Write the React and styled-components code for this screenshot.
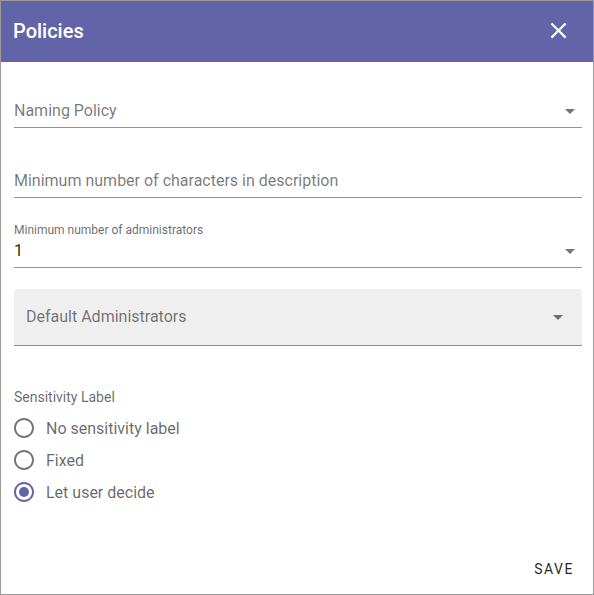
import React from "react";
import styled, { createGlobalStyle } from "styled-components";

const GlobalStyle = createGlobalStyle`
  html, body { margin: 0; padding: 0; background: #fff; }
  body { font-family: Roboto, "Noto Sans", Arial, sans-serif; }
  * { box-sizing: border-box; }
`;

const Dialog = styled.div`
  width: 594px;
  height: 595px;
  border: 1px solid #9a9a9a;
  display: flex;
  flex-direction: column;
  background: #fff;
`;

const Header = styled.header`
  height: 61px;
  background: #6264a7;
  display: flex;
  align-items: center;
  justify-content: space-between;
  padding: 0 11px 2px 12px;
`;

const Title = styled.h2`
  margin: 0;
  color: #fff;
  font-size: 20px;
  font-weight: 500;
  line-height: 24px;
`;

const CloseButton = styled.button`
  width: 48px;
  height: 48px;
  border: 0;
  background: transparent;
  padding: 0;
  display: flex;
  align-items: center;
  justify-content: center;
  color: #fff;
  cursor: pointer;
`;

const Body = styled.div`
  display: flex;
  flex-direction: column;
  gap: 21px;
  padding: 17px 11px 0 13px;
`;

const Field = styled.div`
  display: flex;
  flex-direction: column;
  height: 49px;
`;

const LabelArea = styled.div`
  height: 16px;
  display: flex;
  align-items: flex-end;
  font-size: 12px;
  line-height: 12px;
  color: rgba(0, 0, 0, 0.6);
  position: relative;
  top: 1px;
`;

const InputRoot = styled.div`
  height: 33px;
  display: flex;
  align-items: center;
  justify-content: space-between;
  padding: 6px 0 7px;
  border-bottom: 1px solid rgba(0, 0, 0, 0.42);
  font-size: 16px;
  line-height: 19px;
  color: ${(p) => (p.$value ? "rgba(0,0,0,0.87)" : "rgba(0,0,0,0.54)")};
`;

const ArrowBox = styled.span`
  width: 24px;
  height: 24px;
  margin-right: ${(p) => (p.$filled ? "12px" : "0")};
  display: flex;
  color: rgba(0, 0, 0, 0.54);
  flex-shrink: 0;
`;

const FilledRoot = styled.div`
  height: 57px;
  background: #efefef;
  border-radius: 4px 4px 0 0;
  border-bottom: 1px solid rgba(0, 0, 0, 0.42);
  display: flex;
  align-items: center;
  justify-content: space-between;
  padding: 0 0 1px 12px;
  font-size: 16px;
  line-height: 19px;
  color: rgba(0, 0, 0, 0.54);
`;

const Section = styled.div`
  display: flex;
  flex-direction: column;
  padding-top: 22px;
`;

const SectionLabel = styled.div`
  font-size: 14px;
  line-height: 16px;
  color: rgba(0, 0, 0, 0.6);
  margin-bottom: 7px;
`;

const RadioRow = styled.label`
  height: 32px;
  display: flex;
  align-items: center;
  gap: 10px;
  margin-left: -2px;
  font-size: 16px;
  color: rgba(0, 0, 0, 0.6);
`;

const RadioIcon = styled.span`
  width: 24px;
  height: 24px;
  display: flex;
  color: ${(p) => (p.$checked ? "#6264a7" : "rgba(0,0,0,0.54)")};
`;

const Actions = styled.div`
  margin-top: auto;
  display: flex;
  justify-content: flex-end;
  padding: 0 11px 7px;
`;

const TextButton = styled.button`
  height: 36px;
  padding: 0 8px;
  border: 0;
  background: transparent;
  font-family: Roboto, Arial, sans-serif;
  font-size: 14px;
  font-weight: 400;
  letter-spacing: 1.5px;
  color: rgba(0, 0, 0, 0.87);
  text-transform: uppercase;
  cursor: pointer;
`;

const Arrow = () => (
  <svg width="24" height="24" viewBox="0 0 24 24" fill="currentColor">
    <path d="M7 10l5 5 5-5z" />
  </svg>
);

const Radio = ({ checked }) => (
  <RadioIcon $checked={checked}>
    <svg width="24" height="24" viewBox="0 0 24 24" fill="currentColor">
      <path d="M12 2C6.48 2 2 6.48 2 12s4.48 10 10 10 10-4.48 10-10S17.52 2 12 2zm0 18c-4.42 0-8-3.58-8-8s3.58-8 8-8 8 3.58 8 8-3.58 8-8 8z" />
      {checked && <circle cx="12" cy="12" r="5" />}
    </svg>
  </RadioIcon>
);

const options = [
  { label: "No sensitivity label", checked: false },
  { label: "Fixed", checked: false },
  { label: "Let user decide", checked: true },
];

export default function App() {
  return (
    <>
      <GlobalStyle />
      <Dialog>
        <Header>
          <Title>Policies</Title>
          <CloseButton aria-label="close">
            <svg width="27" height="27" viewBox="0 0 24 24" fill="currentColor">
              <path d="M19 6.41L17.59 5 12 10.59 6.41 5 5 6.41 10.59 12 5 17.59 6.41 19 12 13.41 17.59 19 19 17.59 13.41 12z" />
            </svg>
          </CloseButton>
        </Header>
        <Body>
          <Field>
            <LabelArea />
            <InputRoot>
              <span>Naming Policy</span>
              <ArrowBox>
                <Arrow />
              </ArrowBox>
            </InputRoot>
          </Field>
          <Field>
            <LabelArea />
            <InputRoot>
              <span>Minimum number of characters in description</span>
            </InputRoot>
          </Field>
          <Field>
            <LabelArea>Minimum number of administrators</LabelArea>
            <InputRoot $value>
              <span>1</span>
              <ArrowBox>
                <Arrow />
              </ArrowBox>
            </InputRoot>
          </Field>
          <FilledRoot>
            <span>Default Administrators</span>
            <ArrowBox $filled>
              <Arrow />
            </ArrowBox>
          </FilledRoot>
          <Section>
            <SectionLabel>Sensitivity Label</SectionLabel>
            {options.map((o) => (
              <RadioRow key={o.label}>
                <Radio checked={o.checked} />
                <span>{o.label}</span>
              </RadioRow>
            ))}
          </Section>
        </Body>
        <Actions>
          <TextButton>Save</TextButton>
        </Actions>
      </Dialog>
    </>
  );
}
